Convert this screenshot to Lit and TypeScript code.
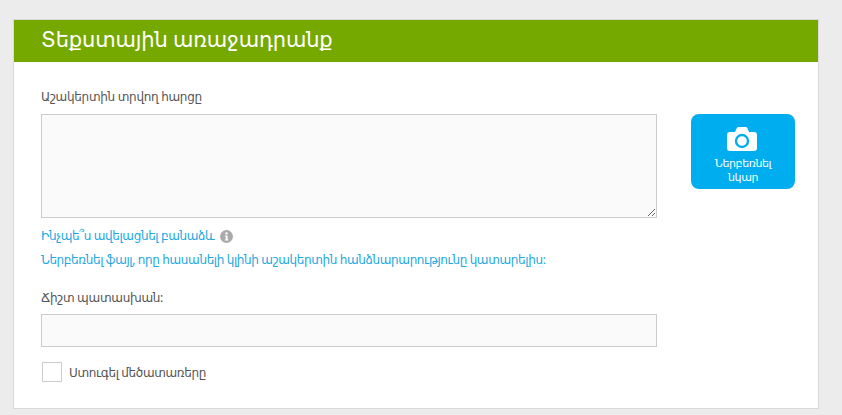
import { LitElement, html, css } from "lit";
import { customElement } from "lit/decorators.js";

@customElement("app-root")
export class AppRoot extends LitElement {
  static styles = css`
    :host { display: block; height: 415px; box-sizing: border-box; background: #ececec; padding: 19px 23px 6px 13px; font-family: "Noto Sans", "DejaVu Sans", sans-serif; color: #555; overflow: hidden; }
    .card { height: 390px; box-sizing: border-box; border: 1px solid #d9d9d9; background: #fff; }
    .head { height: 42px; background: #76a900; color: #fff; font-size: 21px; letter-spacing: -0.15px; line-height: 39px; padding-left: 27px; }
    .body { padding: 27px 23px 0 27px; display: flex; gap: 34px; }
    .main { width: 616px; flex: none; display: flex; flex-direction: column; }
    .label { font-size: 12px; letter-spacing: -0.3px; line-height: 16px; margin-bottom: 9px; }
    textarea, .inp { display: block; box-sizing: border-box; width: 616px; background: #fafafa; border: 1px solid #ccc; margin: 0; padding: 0; }
    textarea { height: 104px; }
    .inp { height: 33px; }
    .link { color: #22a7e0; font-size: 12px; letter-spacing: -0.37px; line-height: 16px; display: flex; align-items: center; gap: 6px; }
    .l1 { margin-top: 10px; }
    .l2 { margin-top: 8px; }
    .label.ans { margin-top: 22px; margin-bottom: 8px; }
    .chk { display: flex; align-items: center; gap: 7px; margin-top: 15px; margin-left: 1px; font-size: 12px; letter-spacing: -0.36px; }
    .box { width: 20px; height: 20px; box-sizing: border-box; border: 1px solid #ccc; background: #fff; }
    .btn { margin-top: 25px; width: 104px; height: 75px; border-radius: 8px; background: #00aeef; color: #fff; flex: none; display: flex; flex-direction: column; align-items: center; font-size: 11px; letter-spacing: -0.4px; line-height: 14px; text-align: center; box-sizing: border-box; padding-top: 13px; }
    .btn svg { display: block; margin-bottom: 5px; margin-right: 2px; }
  `;
  render() {
    return html`<div class="card">
      <div class="head">Տեքստային առաջադրանք</div>
      <div class="body">
        <div class="main">
          <div class="label">Աշակերտին տրվող հարցը</div>
          <textarea></textarea>
          <div class="link l1">Ինչպե՞ս ավելացնել բանաձև
            <svg width="13" height="13" viewBox="0 0 13 13"><circle cx="6.5" cy="6.5" r="6.5" fill="#aaa"/><rect x="5.4" y="2.4" width="2.2" height="2" fill="#fff"/><path d="M4.8 5.4h2.8v4h1v1.2H4.8V9.4h.9V6.6h-.9z" fill="#fff"/></svg>
          </div>
          <div class="link l2">Ներբեռնել ֆայլ, որը հասանելի կլինի աշակերտին հանձնարարությունը կատարելիս:</div>
          <div class="label ans">Ճիշտ պատասխան:</div>
          <div class="inp"></div>
          <div class="chk"><span class="box"></span>Ստուգել մեծատառերը</div>
        </div>
        <div class="btn">
          <svg width="30" height="24" viewBox="0 0 30 24"><path fill="#fff" d="M3 5h5l1.6-3.6A2.4 2.4 0 0 1 11.8 0h6.6a2.4 2.4 0 0 1 2.2 1.4L22 5h5a3 3 0 0 1 3 3v13a3 3 0 0 1-3 3H3a3 3 0 0 1-3-3V8a3 3 0 0 1 3-3z"/><circle cx="15" cy="14" r="6" fill="none" stroke="#00aeef" stroke-width="2.4"/></svg>
          <span>Ներբեռնել<br>նկար</span>
        </div>
      </div>
    </div>`;
  }
}
